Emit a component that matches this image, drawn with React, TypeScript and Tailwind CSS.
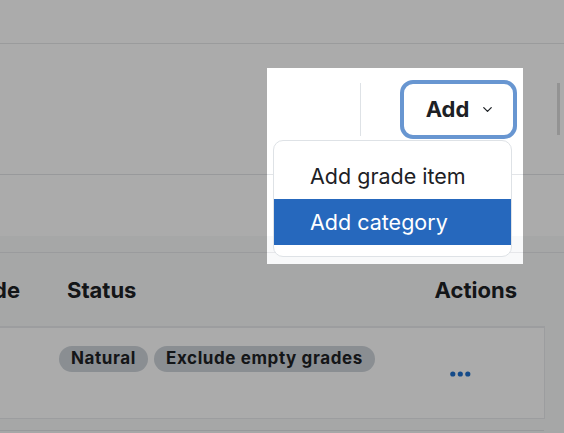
import { ChevronDown } from "lucide-react";

function AddMenu() {
  return (
    <div className="relative ml-[39px] mt-[36px]">
      <button
        type="button"
        className="flex h-[59px] w-[117px] items-center justify-center gap-[11px] rounded-[13px] border-4 border-[#6896d1] bg-white pl-[4px] text-[22px] font-bold text-[#1d2125]"
      >
        <span>Add</span>
        <ChevronDown className="h-[15px] w-[15px]" strokeWidth={2} />
      </button>
      <div className="absolute right-[5px] top-[calc(100%+1px)] w-[239px] rounded-[10px] border border-[#dee2e6] bg-white pt-[12px] pb-[11px] text-[21.5px] text-[#1d2125]">
        <div className="flex h-[46px] items-center px-[36px]">Add grade item</div>
        <div className="flex h-[46px] items-center bg-[#2668bd] px-[36px] text-white">
          Add category
        </div>
      </div>
    </div>
  );
}

function Dots() {
  return (
    <svg width="21" height="6" viewBox="0 0 21 6" className="fill-[#1f6fcc]">
      <circle cx="2.8" cy="3" r="2.6" />
      <circle cx="10.3" cy="3" r="2.6" />
      <circle cx="17.8" cy="3" r="2.6" />
    </svg>
  );
}

export default function App() {
  return (
    <div
      className="relative h-[433px] w-full overflow-hidden bg-white text-[#1d2125]"
      style={{ fontFamily: "Inter, 'Noto Sans', sans-serif" }}
    >
      <div className="h-[44px] border-b border-[#e6e7e9]" />

      <div className="flex h-[131px] items-start justify-end border-b border-[#e3e5e8]">
        <div className="mt-[39px] h-[53px] w-px bg-[#dee2e6]" />
        <AddMenu />
        <div className="ml-[40px] mr-[4px] mt-[39px] h-[52px] w-[3px] bg-[#dcdcdc]" />
      </div>

      <div className="h-[61px]" />

      <div className="bg-[#f8f9fa]">
        <div className="h-[17px] border-b border-[#e6e7ea]" />

        <div className="flex h-[73px] items-center pt-[2px] text-[22px] font-bold">
          <div className="flex w-[20px] justify-end whitespace-nowrap">Grade</div>
          <div className="ml-[47px]">Status</div>
          <div className="ml-auto mr-[47px]">Actions</div>
        </div>

        <div className="flex h-[93px] w-[545px] items-start border-t-2 border-r border-b border-[#e9ebee] bg-white">
          <div className="ml-[59px] mt-[18px] flex gap-[6px] text-[17px] font-bold tracking-[0.6px]">
            <span className="flex h-[26px] items-center rounded-full bg-[#ced4da] px-[12px]">
              Natural
            </span>
            <span className="flex h-[26px] items-center rounded-full bg-[#ced4da] px-[12px]">
              Exclude empty grades
            </span>
          </div>
          <div className="ml-auto mr-[73px] mt-[43px] flex">
            <Dots />
          </div>
        </div>

        <div className="h-[12px] w-[544px] border-b border-[#e3e5e8]" />
        <div className="h-[20px]" />
      </div>

      <div className="pointer-events-none absolute left-[267px] top-[68px] h-[196px] w-[256px] shadow-[0_0_0_2000px_rgba(0,0,0,0.33)]" />
    </div>
  );
}
